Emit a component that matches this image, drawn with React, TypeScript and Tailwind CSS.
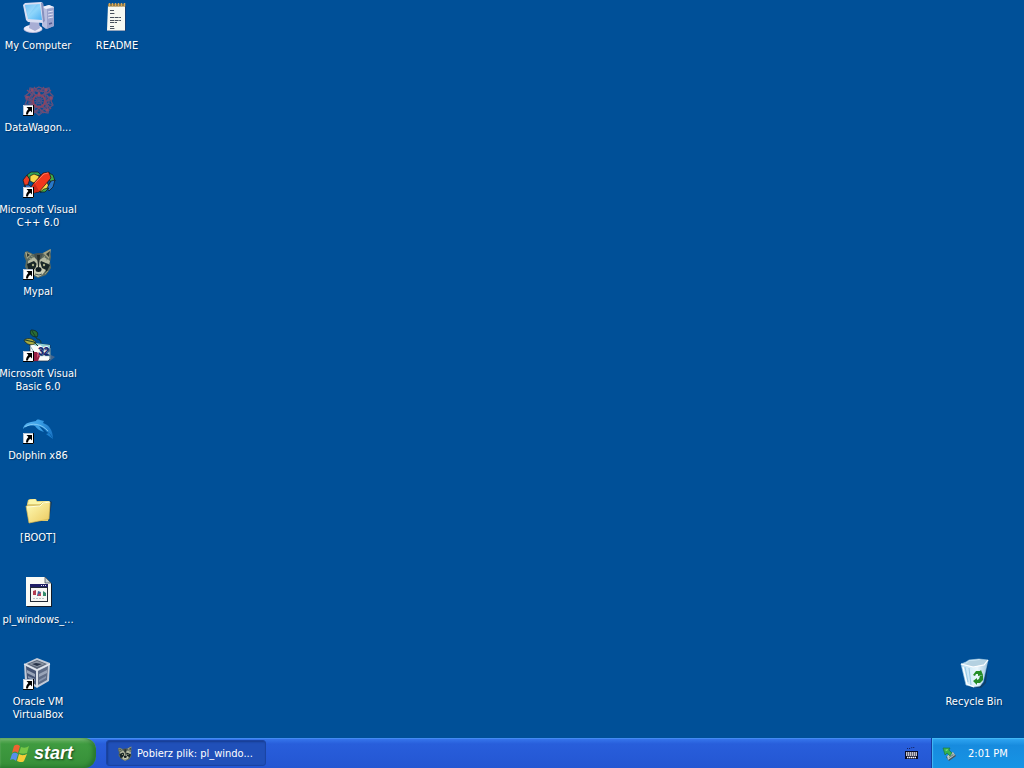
import type { ReactNode } from 'react';

function ShortcutBadge() {
  return (
    <g>
      <path d="M1 21h11v11H1z" fill="#fff" />
      <path d="M1.500 31.500v-10h10" fill="none" stroke="#b8c4d4" />
      <path d="M1 31.500h10.500V21" fill="none" stroke="#000" />
      <path d="M4.500 23H10v5.500L8.300 26.800C7 27.700 6.200 28.700 6 30.500H4c0-2.300.8-4 2.400-5.500z" fill="#000" />
    </g>
  );
}

function Icon({ shortcut, children }: { shortcut?: boolean; children: ReactNode }) {
  return (
    <svg viewBox="0 0 32 32" className="size-8 shrink-0 overflow-visible" aria-hidden="true">
      {children}
      {shortcut && <ShortcutBadge />}
    </svg>
  );
}

function ComputerIcon() {
  return (
    <Icon>
      <defs>
        <linearGradient id="screen" x1="0" y1="0" x2="1" y2="1">
          <stop offset="0" stopColor="#4aa8ee" />
          <stop offset=".5" stopColor="#8fd6fb" />
          <stop offset="1" stopColor="#4fb0f2" />
        </linearGradient>
      </defs>
      <path d="M20 5l7-2 5 2v19l-8 3-4-3z" fill="#b9bfe0" />
      <path d="M25 7l7-1v18l-7 3z" fill="#9aa2cc" />
      <path d="M20 5l7-2 5 2-8 2z" fill="#eef0fb" />
      <path d="M26 10l5-1M26 13l5-1M26 16l5-1" stroke="#e0e4f6" />
      <path d="M27 22l3-1" stroke="#535c94" strokeWidth="1.500" />
      <ellipse cx="11" cy="27" rx="9.500" ry="4" fill="#b9bcdc" />
      <ellipse cx="11" cy="26.500" rx="9" ry="3.500" fill="#eceaf7" />
      <path d="M8 20h9l1 6-5 3-6-3z" fill="#a9aed4" />
      <path d="M1 3l2-2 16-1 2 1 2 18-2 2-15-1-2-2z" fill="#d9def2" />
      <path d="M21 1l2 18-2 2-2-20z" fill="#8790bd" />
      <path d="M3 3l15-1 2 16-14-1z" fill="url(#screen)" />
      <path d="M3 3l12-1-9 12z" fill="#b5e6ff" opacity=".4" />
    </Icon>
  );
}

function NotepadIcon() {
  return (
    <Icon>
      <path d="M8 4h17v25H8z" fill="#173f73" />
      <path d="M7 3h17v25H6z" fill="#f7f9f2" />
      <path d="M6 28.500h18" stroke="#95a6bd" />
      <path d="M7 2h17v2.500H7z" fill="#7d6c40" />
      <path d="M8.500 1v3.500m3-3.500v3.500m3-3.500v3.500m3-3.500v3.500m3-3.500v3.500m3-3.500v3.500" stroke="#d6a85a" strokeWidth="1.500" />
      <path d="M9 8.500h4m-4 3h5m-5 4h11m-11 3h11m-11 2h7m-7 4h4m-4 2h5" stroke="#47505c" strokeDasharray="4 .6" />
    </Icon>
  );
}

function WagonIcon() {
  return (
    <Icon shortcut>
      <g fill="none" stroke="#7c4f74" strokeWidth="1.300" opacity=".85">
        <path d="M17 3l5 2 5-1 1 5 3 3-2 5 2 4-4 3-1 5-5-1-4 3-4-3-5 1-1-5-4-3 2-5-2-4 4-3 1-5 5 1z" />
        <path d="M8 4l18 25M27 4L8 28M3 12l28 9M3 21l28-9M12 4l-4 17 9 10 8-10-3-16" stroke="#5d5480" />
        <path d="M7 8l10-2 10 3M6 12l5 7-3 7m21-14l-6 7 4 8M10 8l7 5 8-5M9 26l8-4 9 4" />
        <path d="M5 6l6 5-7 4 7 3-5 6M29 6l-6 5 7 4-7 3 6 7M12 3l5 6 5-6M12 29l5-5 5 5" stroke="#87496a" />
        <circle cx="17" cy="17" r="10" strokeDasharray="3 1" />
        <circle cx="17" cy="17" r="6" stroke="#a0435a" strokeWidth="2" />
        <circle cx="17" cy="17" r="2.500" stroke="#565086" />
      </g>
      <g fill="#8c4a68">
        <circle cx="10" cy="6" r="1.500" />
        <circle cx="24" cy="6" r="1.500" />
        <circle cx="5" cy="13" r="1.500" />
        <circle cx="29" cy="14" r="1.500" />
        <circle cx="25" cy="26" r="1.500" />
        <circle cx="17" cy="10" r="1.500" />
      </g>
    </Icon>
  );
}

function VisualCIcon() {
  return (
    <Icon shortcut>
      <g stroke="#151515" strokeWidth=".7" strokeLinejoin="round">
        <path d="M1 14l4-5 3 4-3 8H3z" fill="#ed3d24" />
        <path d="M5 9l4-3 7 0 3 3-7 1-4 4z" fill="#31a456" />
        <path d="M3 19l4 0 3 3-2 3-4-3z" fill="#3377cc" />
        <path d="M8 10l4-2 5 2v5l-5 2-4-2z" fill="#f7d94a" />
        <path d="M17 23l3-6 5-1 2 5-4 4-5 1z" fill="#f7d94a" />
        <path d="M27 7l4 2 2 6-4 1-3-4z" fill="#3fab4d" />
        <path d="M29 15l4-1-2 7-4 4-2-3z" fill="#2878c9" />
        <path d="M27 22l-4 4-5 0 4-3z" fill="#3fab4d" />
        <path d="M11 18L21 7l6-1 2 6-12 14-6 1-3-4z" fill="#f0371d" />
      </g>
      <path d="M9 23l4-5 4 7-5 2z" fill="#c9271a" />
      <path d="M13 17l9-9 4-1" fill="none" stroke="#ff7656" />
    </Icon>
  );
}

function RaccoonFace() {
  return (
    <g>
      <path d="M3 4l2-1 6 3 10-1 7-4 1 8-1 5 1 6-5 7-8 3-8-4-5-7 1-6-2-5z" fill="#5d6a5e" />
      <path d="M3 4l7 2-5 5zM29 1l-8 4 6 6z" fill="#a3a385" />
      <path d="M5 5l3 2-3 2zM28 3l-4 3 3 3z" fill="#2e3b38" />
      <path d="M12 6l4-1 5 1-3 7h-4z" fill="#465250" />
      <path d="M6 13l6-4 4 4 6-4 6 4-1 3-7-2-4 4-5-4-5 3z" fill="#b5baa3" />
      <path d="M5 16l7-3 3 3-2 6-6 2zM19 13l9 4-3 6-6 1-2-7z" fill="#172527" />
      <path d="M15 14h3l2 6 4 2-4 5-4 2-5-3v-3l3-4z" fill="#c9ccb4" />
      <path d="M15 7l1 12h1l1-12z" fill="#222c2b" />
      <ellipse cx="16.500" cy="21.500" rx="3" ry="2.500" fill="#101c21" />
      <circle cx="11" cy="17" r="1.200" fill="#a5ac85" />
      <circle cx="22" cy="17" r="1.200" fill="#a5ac85" />
      <path d="M9 8l3 2M7 10l3 1M23 8l-2 2M27 11l-3 1M26 23l-3 3" fill="none" stroke="#8f987d" />
      <path d="M13 26l4 1 3-1" fill="none" stroke="#4a5550" />
    </g>
  );
}

function VisualBasicIcon() {
  return (
    <Icon shortcut>
      <path d="M27 24l6 3-5 4h-5z" fill="#44658d" />
      <path d="M8 13l20 2v14l-2 2H12L8 22z" fill="#f8fcfa" stroke="#1c2536" strokeWidth=".7" />
      <path d="M8 14l5-1 15 2v3l-3-2-4 1-3-2-4 1-4-2z" fill="#8fced2" />
      <path d="M8 16l4 6M28 18v11" fill="none" stroke="#83afbe" />
      <path d="M9 0c6 0 8 3 6 7-5 0-8-3-6-7z" fill="#286c35" stroke="#111e19" strokeWidth=".7" />
      <path d="M2 10c5-3 10-1 12 3-4 3-10 2-12-3z" fill="#a8ab43" stroke="#14231b" strokeWidth=".7" />
      <path d="M3 10l9 2M10 1l5 8c3 0 4 2 4 4M12 12l4 4" fill="none" stroke="#193c28" />
      <path d="M12 22l3 0 3 4-2 5h-4z" fill="#961f43" />
      <path d="M15 23l2 2-2 3z" fill="#d14c69" />
      <text x="16" y="25" fontFamily="Liberation Sans, sans-serif" fontSize="10" fontWeight="bold" fill="#17206f">32</text>
    </Icon>
  );
}

function DolphinIcon() {
  return (
    <Icon shortcut>
      <defs>
        <linearGradient id="dolphin" x1="0" y1="0" x2="1" y2="0">
          <stop offset="0" stopColor="#5bb5f0" />
          <stop offset=".55" stopColor="#3a9fe6" />
          <stop offset="1" stopColor="#1a74c4" />
        </linearGradient>
      </defs>
      <path d="M1 17c1-4 3-6 8-7l5-1c0-1 2-2 4-1l4 1-1 2c6 2 10 7 10 16-1-3-3-6-6-7-2-3-5-5-8-6l5 6c-4-1-7-3-9-6-4-1-7 0-10 1z" fill="url(#dolphin)" />
      <path d="M3 15c7-5 17-3 23 4" fill="none" stroke="#9ad9fb" strokeWidth=".7" />
      <path d="M31 27l-7-5 3-1z" fill="#1d7fce" />
    </Icon>
  );
}

function FolderIcon() {
  return (
    <Icon>
      <defs>
        <linearGradient id="folder" x1="0" y1="0" x2="1" y2="1">
          <stop offset="0" stopColor="#fffdb8" />
          <stop offset="1" stopColor="#ecc95e" />
        </linearGradient>
      </defs>
      <path d="M7 29l18-4 3-18 2 1-3 18-18 3z" fill="#182d43" opacity=".65" />
      <path d="M5 10l1-4 2-1h6l1 2 12 0 1 3-2 17H7z" fill="#e0cd75" />
      <path d="M6 10l1-4 6-1 2 3 12-1v3z" fill="#fbf6a9" />
      <path d="M4 12l13 0 3-3 8-1-1 17-20 4z" fill="url(#folder)" stroke="#d6b956" strokeWidth=".7" />
      <path d="M5 13l13-1 3-3 7-1" fill="none" stroke="#ffffda" />
    </Icon>
  );
}

function ProgramFileIcon() {
  return (
    <Icon>
      <path d="M5 1h18l7 7v23H5z" fill="#111b29" />
      <path d="M4 1h19l6 6v23H4z" fill="#fafbf6" />
      <path d="M23 1v6h6z" fill="#c8d2d6" stroke="#38424d" strokeWidth=".7" />
      <path d="M8 8h18v18H8z" fill="#222b37" />
      <path d="M9 12h16v13H9z" fill="#f7f7f4" />
      <path d="M8 8h18v3H8z" fill="#202066" />
      <path d="M19 9.500h1m1 0h1m1 0h1" stroke="#e4e4ef" />
      <path d="M11 15l3-1v5h-3z" fill="#b33b50" />
      <path d="M16 15l3 1-1 4h-3z" fill="#406297" />
      <path d="M16 18l3-1v3h-3z" fill="#b0465f" />
      <path d="M21 15l3 2v3h-3z" fill="#328b6b" />
      <path d="M11 22.500h12" stroke="#bac2c6" strokeDasharray="2 1" />
    </Icon>
  );
}

function VirtualBoxIcon() {
  return (
    <Icon shortcut>
      <path d="M15 0l13 5-1 18-12 7L3 23 2 6z" fill="#c3cbd8" />
      <path d="M15 2l10 4-10 5L5 6z" fill="#596477" />
      <path d="M4 8l10 5v14L5 21z" fill="#455474" />
      <path d="M16 13l10-5-1 14-9 5z" fill="#5f6d87" />
      <path d="M7 6l8-3 8 3-8 3z" fill="#8b95a4" />
      <path d="M10 6l4-1 6 1-5 2z" fill="#273349" />
      <path d="M5 12l8 4v3l-8-4zM17 16l8-4v3l-8 4z" fill="#98a4b8" />
      <path d="M17 22l7-4v2l-7 4zM6 18l7 3v2l-7-3z" fill="#8593ab" />
      <path d="M2 6l13 6 13-6M15 12v17" fill="none" stroke="#e3e8ef" strokeWidth="1.300" />
    </Icon>
  );
}

function RecycleIcon() {
  return (
    <Icon>
      <defs>
        <linearGradient id="bin" x1="0" y1="0" x2="1" y2="0">
          <stop offset="0" stopColor="#b9e0f5" />
          <stop offset=".6" stopColor="#eaf7fd" />
          <stop offset="1" stopColor="#a2c7df" />
        </linearGradient>
      </defs>
      <path d="M10 29l13 1 5-5 2-20-4 20z" fill="#16344d" opacity=".6" />
      <path d="M3 6l5-2 3-2 10-1 9 1-5 22-3 4-6 1-8-2z" fill="url(#bin)" stroke="#a8cfe5" strokeWidth=".6" />
      <path d="M5 6l4-1 2-2 10-1 8 0-3 4-10 3z" fill="#b4d1e1" />
      <path d="M3 6l12 3 11-2 4-5M5 9l4 17 7 3" fill="none" stroke="#fff" strokeWidth="1.200" />
      <path d="M7 9l3 15M11 10l2 17" stroke="#85bddd" opacity=".7" />
      <g fill="#258d28">
        <path d="M15 17l3-4 4 0 1-1 2 5-5 1v-2l-2 0-1 2z" />
        <path d="M25 17v5l-3 3-3 0v2l-4-4 4-3v2l2-1 1-3z" />
      </g>
    </Icon>
  );
}

function DesktopItem({ icon, label }: { icon: ReactNode; label: string }) {
  return (
    <button
      type="button"
      className="flex h-[82px] w-[76px] shrink-0 flex-col items-center gap-[5px] pt-0.5 text-[11px] leading-[13px] text-white [text-shadow:1px_1px_1px_#003466]"
    >
      {icon}
      <span className="text-center whitespace-pre">{label}</span>
    </button>
  );
}

const desktopItems = [
  { label: 'My Computer', icon: <ComputerIcon /> },
  { label: 'DataWagon...', icon: <WagonIcon /> },
  { label: 'Microsoft Visual\nC++ 6.0', icon: <VisualCIcon /> },
  { label: 'Mypal', icon: <Icon shortcut><RaccoonFace /></Icon> },
  { label: 'Microsoft Visual\nBasic 6.0', icon: <VisualBasicIcon /> },
  { label: 'Dolphin x86', icon: <DolphinIcon /> },
  { label: '[BOOT]', icon: <FolderIcon /> },
  { label: 'pl_windows_...', icon: <ProgramFileIcon /> },
  { label: 'Oracle VM\nVirtualBox', icon: <VirtualBoxIcon /> },
];

function WindowsFlag() {
  return (
    <svg viewBox="0 0 20 18" className="h-[18px] w-5" aria-hidden="true">
      <path d="M4 2c3-2 4-1 6 0L8 9C6 7 4 7 2 9z" fill="#ee6330" />
      <path d="M11 3c3 1 5 1 8-1l-2 7c-3 1-5 1-8 0z" fill="#76c747" />
      <path d="M2 10c2-2 4-1 6 0l-2 7c-2-2-4-2-6-1z" fill="#578fe9" />
      <path d="M9 10c2 1 4 2 8 0l-3 7c-2 2-5 1-7 0z" fill="#f5cc37" />
    </svg>
  );
}

function StartButton() {
  return (
    <button
      type="button"
      className="flex h-full w-24 shrink-0 items-center gap-1 rounded-r-xl bg-linear-to-b from-[#6cb468] via-[#3f9b40] via-20% to-[#368f38] pl-2.5 text-lg leading-6 font-bold text-white italic shadow-[inset_-3px_-1px_4px_#26742c,inset_0_2px_2px_#7cbd76] [text-shadow:1px_1px_2px_#19451c]"
    >
      <WindowsFlag />
      <span className="font-['Liberation_Sans',sans-serif]">start</span>
    </button>
  );
}

function KeyboardIcon() {
  return (
    <svg viewBox="0 0 16 16" className="size-4" aria-hidden="true">
      <path d="M4 3.500h3l2-1h3" fill="none" stroke="#13205e" strokeDasharray="1 1" />
      <path d="M2 6h13v8H2z" fill="#080b25" />
      <path d="M3 8h11M3 10h11M4 12.500h9" stroke="#fff" strokeWidth="1.500" strokeDasharray="1.500 .5" />
    </svg>
  );
}

function RemoveHardwareIcon() {
  return (
    <svg viewBox="0 0 16 16" className="size-4" aria-hidden="true">
      <path d="M4 11l7-5 3 4-7 5z" fill="#455760" />
      <path d="M5 10l6-4 2 3-7 5z" fill="#bbc9c7" />
      <path d="M7 11l4-3 1 1-5 3z" fill="#6c8588" />
      <path d="M1 2l7 0-1 2 3 3-2 3-3-3-2 2z" fill="#35b34e" stroke="#176e40" strokeWidth=".6" />
      <path d="M3 4l3-1-1 2z" fill="#8edf82" />
    </svg>
  );
}

function Taskbar() {
  return (
    <footer className="flex h-[30px] shrink-0 items-stretch bg-linear-to-b from-[#3879ee] via-[#285edb] via-20% to-[#2456d2] shadow-[inset_0_1px_0_#438bf4]">
      <StartButton />
      <div className="flex min-w-0 flex-1 items-center pl-2.5">
        <button
          type="button"
          className="flex h-[26px] w-40 items-center gap-1 rounded-[3px] border border-[#1a44a3] bg-[#2050b9] pt-0.5 pl-2.5 text-[11px] leading-4 text-white shadow-[inset_1px_1px_2px_#163b8f]"
        >
          <svg viewBox="0 0 32 32" className="size-4 shrink-0" aria-hidden="true"><RaccoonFace /></svg>
          <span className="truncate">Pobierz plik: pl_windo...</span>
        </button>
      </div>
      <button type="button" aria-label="Keyboard layout" className="flex w-10 items-center justify-center">
        <KeyboardIcon />
      </button>
      <div className="flex w-[93px] items-center gap-2.5 border-l border-[#173c9f] bg-linear-to-b from-[#30a7f3] via-[#178bde] via-25% to-[#1694e5] pt-0.5 pl-2.5 text-[11px] leading-4 text-white shadow-[inset_1px_1px_1px_#45bbf5]">
        <button type="button" aria-label="Safely remove hardware"><RemoveHardwareIcon /></button>
        <time dateTime="14:01">2:01 PM</time>
      </div>
    </footer>
  );
}

export default function App() {
  return (
    <div className="flex min-h-screen flex-col bg-[#005098] font-['DejaVu_Sans_Condensed','DejaVu_Sans',sans-serif]">
      <main className="flex flex-1 items-start gap-[3px]">
        <nav aria-label="Desktop" className="flex flex-col">
          {desktopItems.map((item) => (
            <DesktopItem key={item.label} {...item} />
          ))}
        </nav>
        <DesktopItem icon={<NotepadIcon />} label="README" />
        <div className="mr-3 ml-auto self-end">
          <DesktopItem icon={<RecycleIcon />} label="Recycle Bin" />
        </div>
      </main>
      <Taskbar />
    </div>
  );
}
